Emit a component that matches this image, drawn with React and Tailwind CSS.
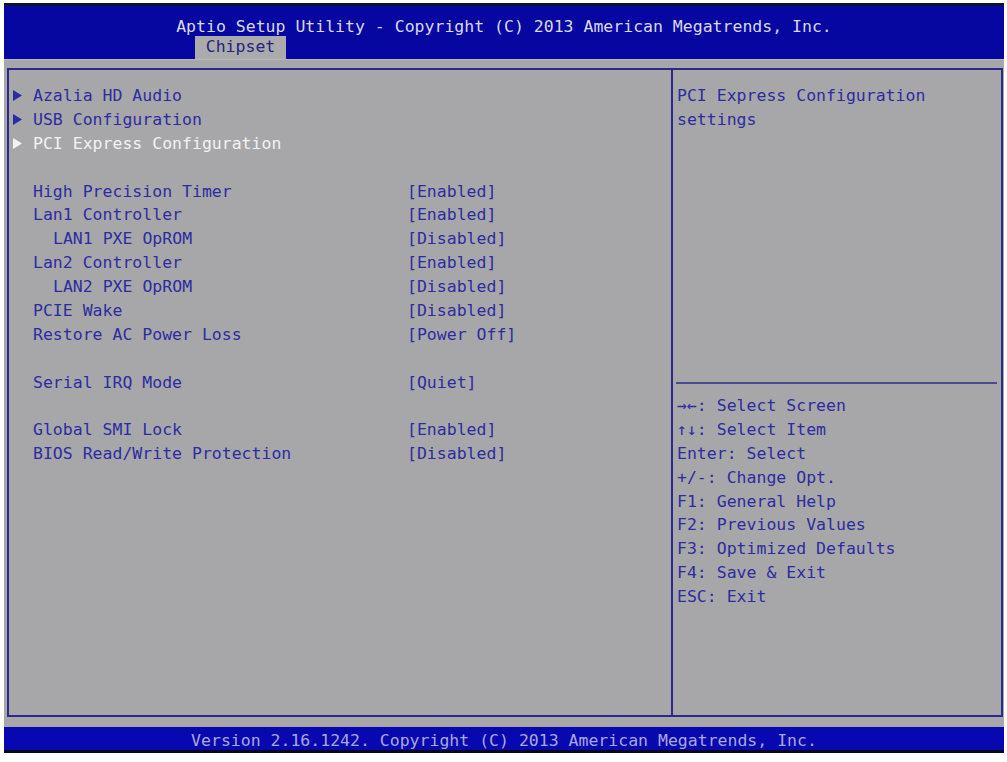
import React from 'react';

const mono = { fontFamily: '"DejaVu Sans Mono", "Liberation Mono", monospace' };

const items = [
  { label: 'Azalia HD Audio', sub: true },
  { label: 'USB Configuration', sub: true },
  { label: 'PCI Express Configuration', sub: true, active: true },
  { blank: true },
  { label: 'High Precision Timer', value: '[Enabled]' },
  { label: 'Lan1 Controller', value: '[Enabled]' },
  { label: 'LAN1 PXE OpROM', value: '[Disabled]', indent: true },
  { label: 'Lan2 Controller', value: '[Enabled]' },
  { label: 'LAN2 PXE OpROM', value: '[Disabled]', indent: true },
  { label: 'PCIE Wake', value: '[Disabled]' },
  { label: 'Restore AC Power Loss', value: '[Power Off]' },
  { blank: true },
  { label: 'Serial IRQ Mode', value: '[Quiet]' },
  { blank: true },
  { label: 'Global SMI Lock', value: '[Enabled]' },
  { label: 'BIOS Read/Write Protection', value: '[Disabled]' },
];

const help = [
  '→←: Select Screen',
  '↑↓: Select Item',
  'Enter: Select',
  '+/-: Change Opt.',
  'F1: General Help',
  'F2: Previous Values',
  'F3: Optimized Defaults',
  'F4: Save & Exit',
  'ESC: Exit',
];

function Arrow({ white }) {
  return (
    <svg width="10" height="11" viewBox="0 0 10 11" className="mt-[6px] ml-[4px]">
      <path d="M0 0 L9 5.5 L0 11 Z" fill={white ? '#f2f2f6' : '#2c2ca0'} />
    </svg>
  );
}

export default function App() {
  return (
    <div className="w-[1007px] h-[762px] bg-white pt-[3px] pl-[4px] pr-[3px] overflow-hidden" style={mono}>
      <div className="flex h-[750px] flex-col bg-[#a7a7a9]">
        {/* header */}
        <div className="flex h-[56px] flex-col border-t-[3px] border-[#101030] bg-[#0606a0]">
          <div className="flex h-[30px] items-start justify-center pt-[11px] text-[16.5px] leading-[20px] text-[#d8d8ea]">
            Aptio Setup Utility - Copyright (C) 2013 American Megatrends, Inc.
          </div>
          <div className="flex flex-1 items-end pl-[191px]">
            <div className="flex h-[23px] w-[91px] items-center justify-center bg-[#ababad] text-[16.5px] text-[#24247a]">
              Chipset
            </div>
          </div>
        </div>

        <div className="h-[9px] border-t border-[#b8b8c4]" />

        {/* main panel */}
        <div className="ml-[3px] mr-[1px] flex h-[649px] border-2 border-[#2a2a8c] text-[16.5px] leading-[23.875px]">
          <div className="w-[662px] pt-[14px]">
            {items.map((it, i) =>
              it.blank ? (
                <div key={i} className="h-[23.875px]" />
              ) : (
                <div key={i} className="flex h-[23.875px]">
                  <div className="w-[24px] shrink-0">{it.sub && <Arrow white={it.active} />}</div>
                  <div className={`w-[374px] shrink-0 ${it.indent ? 'pl-[20px]' : ''} ${it.active ? 'text-[#f2f2f6]' : 'text-[#2c2ca0]'}`}>
                    {it.label}
                  </div>
                  {it.value && <div className="text-[#2c2ca0]">{it.value}</div>}
                </div>
              )
            )}
          </div>

          <div className="flex flex-1 flex-col border-l-2 border-[#2a2a8c]">
            <div className="h-[312px] pl-[4px] pt-[14px] text-[#2c2ca0]">
              <div>PCI Express Configuration</div>
              <div>settings</div>
            </div>
            <div className="ml-[3px] mr-[4px] h-[2px] bg-[#4a4a90]" />
            <div className="pl-[4px] pt-[10px] text-[#2c2ca0]">
              {help.map((h) => (
                <div key={h} className="h-[23.875px] whitespace-pre">{h}</div>
              ))}
            </div>
          </div>
        </div>

        <div className="h-[10px]" />

        {/* footer */}
        <div className="flex h-[26px] items-center justify-center border-b-[3px] border-[#08081c] bg-[#0808b0] pt-[5px] text-[16.5px] text-[#a8a8d8]">
          Version 2.16.1242. Copyright (C) 2013 American Megatrends, Inc.
        </div>
      </div>
    </div>
  );
}
